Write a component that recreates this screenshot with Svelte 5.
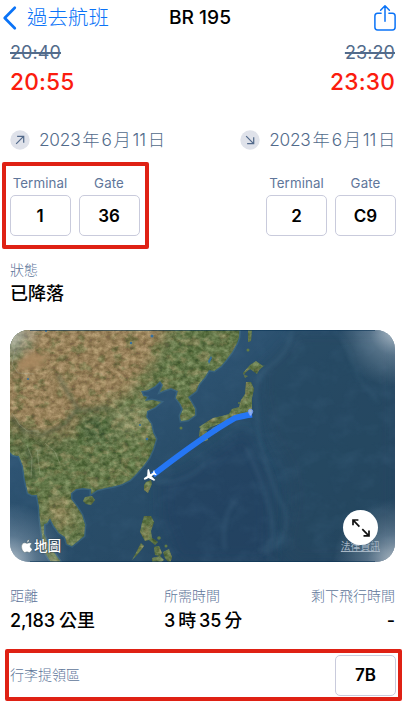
<script>
  const legs = [
    { old: '20:40', now: '20:55', terminal: '1', gate: '36', arrow: 'M4.3 9.7 9.5 4.5M5 4.4h4.6V9' },
    { old: '23:20', now: '23:30', terminal: '2', gate: 'C9', arrow: 'M4.3 4.3 9.5 9.5M5 9.6h4.6V5' }
  ];
  const mainland = 'M0 320H240L239 337 237 343 232 352 226 360 221 366 214 371 209 370 205 377 199 384 196 391 188 397 191 402 195 409 195 415 188 420 181 421 180 416 183 409 180 403 176 398 178 391 171 388 165 390 160 392 163 385 160 381 155 386 148 390 141 391 143 396 147 397 145 401 152 400 161 402 155 407 147 411 146 417 151 424 153 433 156 439 153 449 149 458 144 465 137 473 130 480 122 484 115 486 105 488 97 490 91 494 91 489 83 488 76 489 71 493 71 499 77 507 82 515 85 525 84 536 78 541 72 546 67 544 65 537 59 533 54 526 50 518 47 523 44 524 44 534 47 542 53 551 62 564H52L44 551 42 535 40 520 39 506 37 495 32 495 28 493 25 480 23 466 19 456 13 455 10 452 0 450Z';
</script>

<main>
  <header>
    <div class="back">
      <svg width="18" height="26" viewBox="0 0 18 26"><path d="M13.8 2.8 3.7 13l10.1 10.2" fill="none" stroke="#0a73f7" stroke-width="2.7" stroke-linecap="round" stroke-linejoin="round" /></svg>
      <span>過去航班</span>
    </div>
    <h1>BR 195</h1>
    <svg class="share" width="24" height="28" viewBox="0 0 24 28"><path d="M8.1 9.2H4.6Q1.9 9.2 1.9 12v11.3Q1.9 26 4.6 26h14.8q2.7 0 2.7-2.7V12q0-2.8-2.7-2.8h-3.5M12 17.2V2.2M7.6 6.3 12 1.8l4.4 4.5" fill="none" stroke="#0a73f7" stroke-width="1.5" stroke-linecap="round" stroke-linejoin="round" /></svg>
  </header>

  <section class="legs">
    {#each legs as leg, i}
      <div class="leg" class:right={i === 1}>
        <s>{leg.old}</s>
        <strong class="time">{leg.now}</strong>
        <div class="date">
          <svg width="20" height="20" viewBox="0 0 14 14"><circle cx="7" cy="7" r="6.8" fill="#dfe2ea" /><path d={leg.arrow} fill="none" stroke="#52698a" stroke-width=".85" /></svg>
          <span class="datetext"><span>2023</span><span>年</span><span>6</span><span>月</span><span>11</span><span>日</span></span>
        </div>
        <div class="places" class:marked={i === 0}>
          <div><label for={`terminal${i}`}>Terminal</label><output id={`terminal${i}`}>{leg.terminal}</output></div>
          <div><label for={`gate${i}`}>Gate</label><output id={`gate${i}`}>{leg.gate}</output></div>
        </div>
      </div>
    {/each}
  </section>

  <section class="status"><small>狀態</small><b>已降落</b></section>

  <section class="map">
    <svg width="385" height="232" viewBox="10 330 385 232">
      <defs>
        <filter id="soft" x="-30%" y="-30%" width="160%" height="160%"><feGaussianBlur stdDeviation="7" /></filter>
        <filter id="mist" x="-30%" y="-30%" width="160%" height="160%"><feGaussianBlur stdDeviation="2" /></filter>
        <filter id="terrain" x="0" y="0" width="100%" height="100%" color-interpolation-filters="sRGB">
          <feTurbulence type="fractalNoise" baseFrequency=".17 .21" numOctaves="5" seed="8" />
          <feColorMatrix values="1.7 0 0 0 -.4  1.6 .1 0 0 -.38  1.5 0 0 0 -.45  0 0 0 0 1" />
        </filter>
        <filter id="patches" x="0" y="0" width="100%" height="100%" color-interpolation-filters="sRGB">
          <feTurbulence type="fractalNoise" baseFrequency=".1 .13" numOctaves="5" seed="21" />
          <feColorMatrix values="0 0 0 0 .7  0 0 0 0 .6  0 0 0 0 .43  0 5 0 0 -2.4" />
        </filter>
        <filter id="woods" x="0" y="0" width="100%" height="100%" color-interpolation-filters="sRGB">
          <feTurbulence type="fractalNoise" baseFrequency=".08 .11" numOctaves="5" seed="4" />
          <feColorMatrix values="0 0 0 0 .23  0 0 0 0 .37  0 0 0 0 .17  5 0 0 0 -2.6" />
        </filter>
        <filter id="water" x="0" y="0" width="100%" height="100%" color-interpolation-filters="sRGB">
          <feTurbulence type="fractalNoise" baseFrequency=".045 .06" numOctaves="5" seed="5" />
          <feColorMatrix values="0 0 0 0 .27  0 0 0 0 .42  0 0 0 0 .54  2 0 0 0 -.85" />
        </filter>
        <clipPath id="landclip">
          <path d={mainland} />
          <path d="M250 365 256 361 263 366 265 365 259 370 257 374 250 369 246 372 244 375 248 376 245 378 243 373ZM246 382 251 382 254 389 252 398 252 407 251 414 245 416 239 417 232 420 225 422 219 424 211 427 207 430 202 430 199 427 205 423 213 418 222 416 229 414 232 409 239 407 241 400 245 394ZM200 429 207 431 208 440 202 442 199 435ZM212 428 221 424 224 427 216 433 210 432Z" />
          <path d="M146 482 151 480 152 484 148 493 144 490 144 485ZM85 497 92 496 95 500 91 505 86 504 83 501ZM144 516 151 516 154 522 151 531 152 538 158 542 155 545 149 540 145 541 140 532 142 523ZM154 547 159 546 162 553 160 556 155 555ZM163 552 169 549 172 557 170 564 165 558ZM152 558 160 556 164 560 159 564 152 563ZM248 330 252 330 251 341 248 342ZM141 543 144 546 138 554 132 560 137 551Z" />
        </clipPath>
        <linearGradient id="sea" x2="1" y2="1"><stop stop-color="#365f84" /><stop offset=".48" stop-color="#294d69" /><stop offset="1" stop-color="#24445f" /></linearGradient>
        <radialGradient id="corner"><stop offset="0" stop-color="#fff" stop-opacity=".65" /><stop offset=".45" stop-color="#dae4f0" stop-opacity=".26" /><stop offset="1" stop-color="#dae4f0" stop-opacity="0" /></radialGradient>
      </defs>
      <rect x="10" y="330" width="385" height="232" fill="url(#sea)" />
      <path d="M262 365Q257 385 263 408L270 438Q280 453 288 470L292 500 283 548 294 562H395V330H295Q280 354 262 365Z" fill="#25475f" filter="url(#soft)" opacity=".55" />
      <path d="M160 480Q185 475 200 462L246 429 270 480 271 562H177L161 520Z" fill="#203f60" filter="url(#soft)" opacity=".6" />
      <rect x="10" y="330" width="385" height="232" filter="url(#water)" opacity=".22" />
      <g fill="none" stroke="#57809a" opacity=".25" filter="url(#mist)" stroke-width="3">
        <path d="M292 330Q289 353 270 366T257 407Q255 430 267 467T284 506Q293 540 264 553M246 447Q264 483 271 515T260 550M154 480Q180 488 205 464M225 550Q220 520 235 500" />
        <path d="M333 330Q348 342 352 361T371 393L378 403" stroke-width="1.5" />
      </g>
      <path d={mainland} fill="none" stroke="#5990a1" stroke-width="3" opacity=".28" />
      <g clip-path="url(#landclip)">
        <rect x="0" y="320" width="400" height="246" fill="#60784a" />
        <g filter="url(#soft)">
          <path d="M0 320H173L157 351 145 376 130 392 104 406 78 412 72 429 50 434 0 422Z" fill="#a58560" />
          <path d="M10 330 30 332 17 363 0 380Z" fill="#707e5d" />
          <path d="M110 407 146 405 148 434 122 438Z" fill="#879066" />
          <path d="M0 418 32 435 70 431 60 459 16 456Z" fill="#5b6d44" />
          <path d="M46 499 70 499 75 526 55 523Z" fill="#9c8d62" />
          <path d="M75 413 110 410 112 443 74 440Z" fill="#4c6840" />
        </g>
        <rect x="0" y="320" width="400" height="246" filter="url(#patches)" opacity=".36" />
        <rect x="0" y="320" width="400" height="246" filter="url(#woods)" opacity=".36" />
        <rect x="0" y="320" width="400" height="246" filter="url(#terrain)" opacity=".23" />
        <path d="M18 362Q27 350 43 354L48 362Q34 371 18 370Z" fill="#a98861" filter="url(#mist)" opacity=".8" />
        <g fill="none" stroke="#38523a" stroke-width="2.5" opacity=".75" filter="url(#mist)"><path d="M10 417 25 432 43 435 64 425 78 409 65 388 58 375M28 450 35 479M80 411 109 408M67 420 80 408" /></g>
        <g fill="none" stroke="#b6bda6" stroke-width=".7" opacity=".4"><path d="M12 413 19 424 27 431 39 431M15 350 12 364 18 373 34 374M27 445 32 458 31 478M37 450 40 474M45 443 55 452 60 464" /></g>
        <g fill="#386f9c"><circle cx="152" cy="336" r="1.5" /><circle cx="131" cy="343" r="1.2" /><circle cx="28" cy="379" r="1" /><circle cx="140" cy="425" r="1" /><circle cx="147" cy="439" r="1.3" /><circle cx="46" cy="331" r="1" /><path d="m208 361 3-5 1 2-3 6Z" /></g>
      </g>
      <g fill="#627b45"><circle cx="181" cy="428" r="1.5" /><circle cx="239" cy="403" r="1" /><circle cx="248" cy="350" r="1.5" /><circle cx="159" cy="538" r="1.8" /><circle cx="166" cy="546" r="1.5" /></g>
      <g fill="url(#corner)"><circle cx="10" cy="330" r="34" /><circle cx="395" cy="330" r="57" /><circle cx="10" cy="562" r="59" /><circle cx="395" cy="562" r="62" /></g>
      <path d="M30 330.5H375M30 561.5H375" stroke="#093253" opacity=".55" />
      <path d="M153 475Q205 435 235 418 241 416.2 252 414.5" fill="none" stroke="#2576f4" stroke-width="5.9" />
      <g fill="#b6cdff" fill-opacity=".7" stroke="#7498f2" stroke-width=".9"><circle cx="250.5" cy="411.5" r="2.2" /><path d="m249 413.5 1.5 2.5 1.7-2.5" /></g>
      <path transform="translate(149.5 476) rotate(-120) scale(.92)" d="M0-7C1.2-7 1.3-5 1.3-2.2L7 1.6V3.3L1.3 1.8 1 5.1 2.8 6.5V7.5L0 6.8-2.8 7.5V6.5L-1 5.1-1.3 1.8-7 3.3V1.6L-1.3-2.2C-1.3-5-1.2-7 0-7Z" fill="white" />
    </svg>
    <div class="maplogo">
      <svg width="12" height="14" viewBox="0 0 12 14"><path d="M8.3.4Q8.3 3 5.8 3.4 5.8 1 8.3.4ZM10.7 4.7Q9 5.8 9.2 7.6 9.5 9.4 11.3 10 10.3 13.2 8.5 13.4 7.6 13.4 6.9 13 6 12.6 5.1 13 4.3 13.4 3.6 13.4 2 13.1 1 10.2-.1 6.7 1.3 5 2.7 3.4 4.6 4L6 4.4 7.7 3.9Q9.5 3.5 10.7 4.7Z" fill="white" stroke="#52625d" stroke-width=".35" /></svg>
      <span>地圖</span>
    </div>
    <span class="legal">法律資訊</span>
    <div class="expand"><svg width="20" height="20" viewBox="0 0 20 20"><path d="M8.4 8.6 2.4 2.3M2 7.2V2h5.4M11.3 11.2l6.1 6.2M18 12.6v5.2h-5.5" fill="none" stroke="#111" stroke-width="1.7" /></svg></div>
  </section>

  <section class="facts">
    <div><small>距離</small><b><span>2,183</span><span>公里</span></b></div>
    <div class="duration"><small>所需時間</small><b><span>3</span><span>時</span><span>35</span><span>分</span></b></div>
    <div class="remaining"><small>剩下飛行時間</small><b>-</b></div>
  </section>
  <section class="baggage"><small>行李提領區</small><output>7B</output></section>
</main>

<style>
  :global(body) { margin: 0; background: white; }
  main { box-sizing: border-box; width: 410px; height: 706px; overflow: hidden; background: white; color: #000; font-family: Inter, "Noto Sans CJK TC", sans-serif; }
  header { height: 36px; display: grid; grid-template-columns: 1fr 80px 1fr; align-items: center; padding: 0 13px 0 1px; }
  .back { display: flex; align-items: center; color: #0a73f7; font-size: 20.5px; line-height: 30px; font-weight: 300; gap: 8px; }
  .back svg { flex: none; }
  .back span { white-space: nowrap; }
  h1 { margin: 0; padding-left: 2px; font-size: 19.2px; line-height: 29px; font-weight: 500; text-align: center; white-space: nowrap; height: 30px; }
  .share { justify-self: end; }
  .legs { height: 213px; padding: 0 15px 0 10px; display: flex; justify-content: space-between; }
  .leg { display: flex; flex-direction: column; align-items: flex-start; }
  .leg.right { align-items: flex-end; }
  s { height: 29px; padding-top: 5px; box-sizing: border-box; color: #526b8b; font-size: 18px; line-height: 24px; letter-spacing: .1px; text-decoration-thickness: 1.5px; }
  .time { height: 63px; box-sizing: border-box; padding-top: 1px; color: #fb1c0e; font-size: 22.7px; line-height: 32px; font-weight: 500; letter-spacing: .2px; }
  .date { height: 24px; display: flex; align-items: center; gap: 9px; color: #526b8b; font-size: 17.3px; line-height: 24px; font-weight: 300; white-space: nowrap; }
  .datetext { display: flex; gap: 2px; letter-spacing: -.25px; }
  .places { height: 87px; box-sizing: border-box; display: flex; align-items: flex-start; gap: 8px; padding-top: 11px; margin-top: 10px; margin-right: -1px; }
  .places.marked { width: 147px; padding: 7px 3.5px 0; margin-left: -8px; border: 4px solid #df2114; border-radius: 2px; }
  .places > div { width: 61px; }
  label { display: block; height: 22px; text-align: center; color: #60769a; font-size: 13.3px; line-height: 21px; letter-spacing: .1px; }
  output { box-sizing: border-box; width: 61px; height: 41px; border: 1.2px solid #c9cbdc; border-radius: 5px; display: flex; align-items: center; justify-content: center; font-size: 17px; font-weight: 600; }
  small { display: block; color: #60769a; font-size: 14px; line-height: 20px; font-weight: 300; white-space: nowrap; }
  b { display: flex; gap: 4px; font-size: 18px; line-height: 25px; font-weight: 500; white-space: nowrap; }
  .status { height: 81px; box-sizing: border-box; padding: 11px 10px 0; }
  .status b { padding-top: 1px; }
  .map { position: relative; width: 385px; height: 232px; margin-left: 10px; border-radius: 19px; overflow: hidden; }
  .map > svg { display: block; }
  .maplogo { position: absolute; left: 11px; bottom: 5px; display: flex; align-items: center; gap: 1px; color: white; font-size: 13.5px; line-height: 22px; font-weight: 500; text-shadow: 0 0 2px #30404d, 0 0 1px #30404d; }
  .legal { position: absolute; right: 15px; bottom: 8px; color: #a7b7c6; font-size: 9.8px; line-height: 14px; text-decoration: underline; }
  .expand { position: absolute; right: 17px; bottom: 17px; width: 35px; height: 35px; border-radius: 50%; background: white; display: flex; align-items: center; justify-content: center; }
  .facts { height: 87px; box-sizing: border-box; padding: 24px 15px 0 10px; display: grid; grid-template-columns: 154px 116px 1fr; }
  .facts b { padding-top: 2px; }
  .duration b { gap: 3px; letter-spacing: -.1px; }
  .remaining { display: flex; flex-direction: column; align-items: flex-end; }
  .baggage { box-sizing: border-box; width: 397px; height: 52px; margin-left: 5px; padding: 0 2px 0 1px; border: 4px solid #df2114; border-radius: 2px; display: flex; align-items: center; justify-content: space-between; }
</style>
